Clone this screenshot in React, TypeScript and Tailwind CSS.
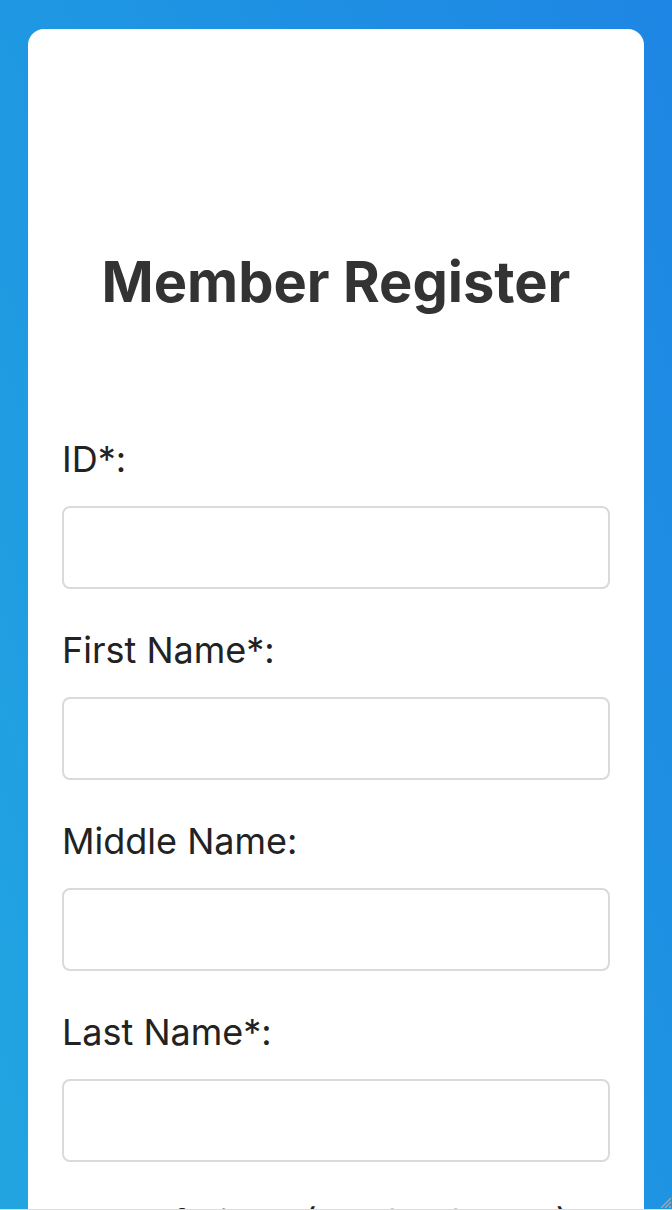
import React from 'react'

const fields = [
  { label: 'ID*:', name: 'id' },
  { label: 'First Name*:', name: 'firstName' },
  { label: 'Middle Name:', name: 'middleName' },
  { label: 'Last Name*:', name: 'lastName' },
  { label: 'Date of Birth* (MM/DD/YYYY):', name: 'dob' },
  { label: 'Email*:', name: 'email' },
]

export default function App() {
  return (
    <div className="min-h-screen bg-linear-to-tr from-[#23a9e0] to-[#1e86e4] px-[28px] pt-[29px] font-['Inter','Liberation_Sans',sans-serif]">
      <div className="rounded-t-[16px] bg-white px-[34px] pt-[220px] pb-16">
        <h1 className="text-center text-[56px] font-bold leading-[1.2] text-[#333333]">
          Member Register
        </h1>

        <form className="mt-[116px]">
          {fields.map((f, i) => (
            <div key={f.name} className={i === 0 ? '' : 'mt-[34px]'}>
              <label
                htmlFor={f.name}
                className="block text-[36px] leading-[1.5] text-[#222222]"
              >
                {f.label}
              </label>
              <input
                id={f.name}
                type="text"
                className="mt-[20px] block h-[83px] w-full rounded-[8px] border-2 border-[#dadada] bg-white px-4 text-[28px] outline-none"
              />
            </div>
          ))}
        </form>
      </div>

      {/* frame edge + resize grip */}
      <div className="fixed bottom-0 left-0 right-0 h-px bg-[#dcdcdc]" />
      <svg
        className="fixed bottom-[1px] right-0 h-[14px] w-[14px]"
        viewBox="0 0 14 14"
      >
        <path d="M13 3 L3 13 M13 7 L7 13 M13 11 L11 13" stroke="#a9a9a9" strokeWidth="1.2" />
      </svg>
    </div>
  )
}
